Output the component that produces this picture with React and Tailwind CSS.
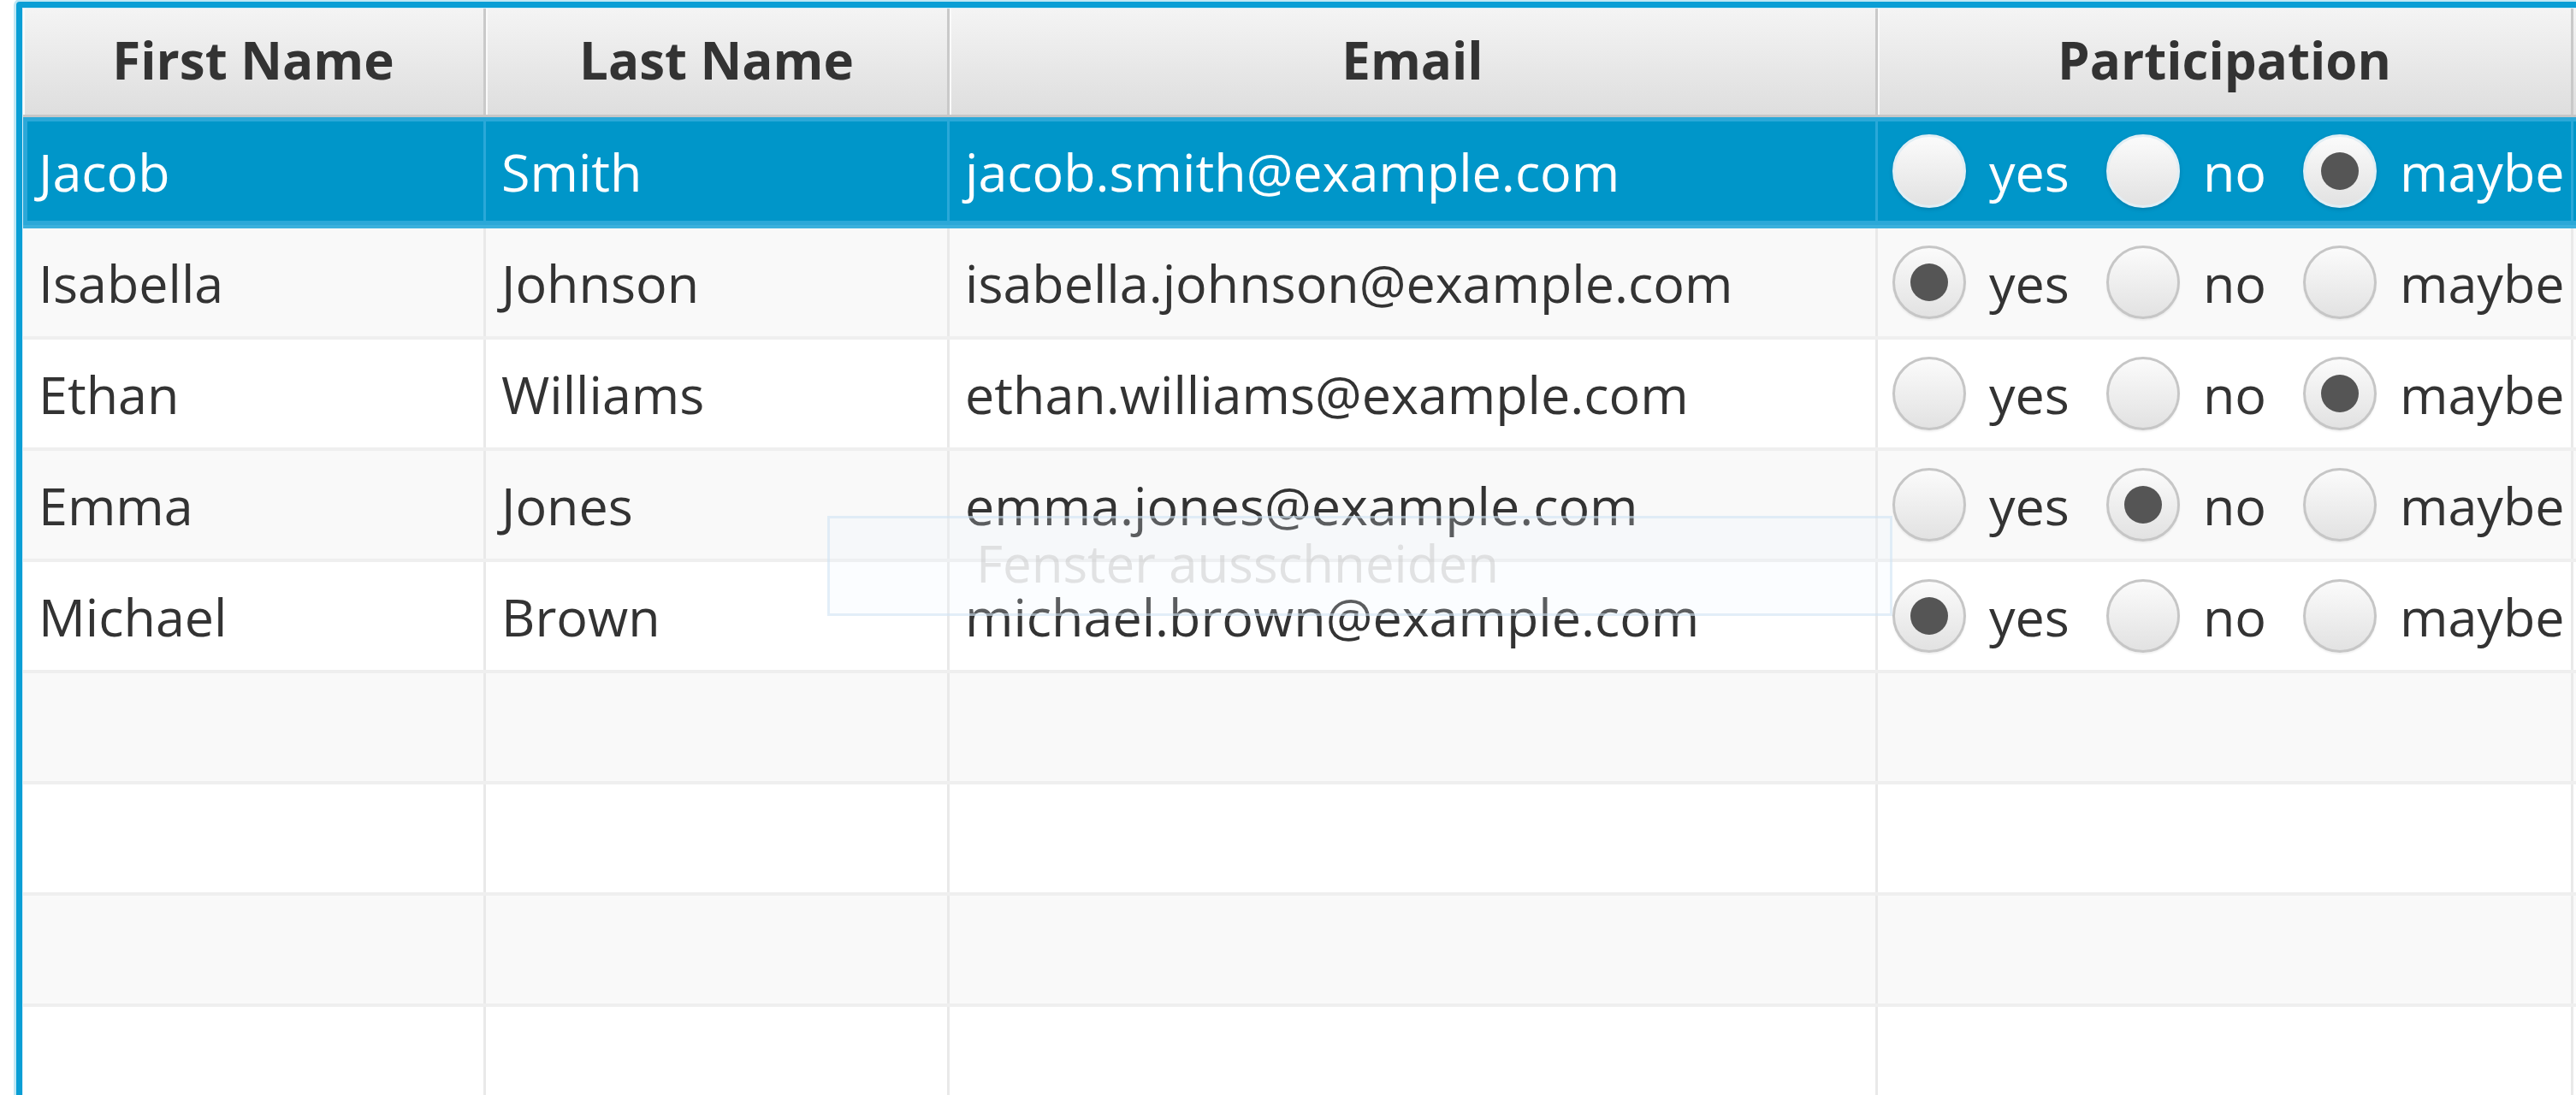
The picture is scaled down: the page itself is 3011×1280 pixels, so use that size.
import React from "react";

const rows = [
  { first: "Jacob", last: "Smith", email: "jacob.smith@example.com", p: "maybe" },
  { first: "Isabella", last: "Johnson", email: "isabella.johnson@example.com", p: "yes" },
  { first: "Ethan", last: "Williams", email: "ethan.williams@example.com", p: "maybe" },
  { first: "Emma", last: "Jones", email: "emma.jones@example.com", p: "no" },
  { first: "Michael", last: "Brown", email: "michael.brown@example.com", p: "yes" },
  null,
  null,
  null,
  null,
];

function Radio({ checked, label, selected, last }) {
  return (
    <div className={"flex items-center " + (last ? "" : "mr-[43px]")}>
      <div
        className={
          "w-[86px] h-[86px] rounded-full flex items-center justify-center shrink-0 bg-gradient-to-b from-[#fbfbfb] to-[#e2e2e2] " +
          (selected
            ? "border-[3px] border-[#e2eef4] shadow-[0_2px_4px_rgba(0,60,90,0.25)]"
            : "border-[3px] border-[#c6c6c6] shadow-[0_2px_2px_rgba(0,0,0,0.06)]")
        }
      >
        {checked && <div className="w-[44px] h-[44px] rounded-full bg-[#555555]" />}
      </div>
      <span className={"ml-[27px] " + (selected ? "text-white" : "text-[#333333]")}>{label}</span>
    </div>
  );
}

function Row({ data, index }) {
  const selected = index === 0;
  const odd = index % 2 === 1;
  const bg = selected ? "bg-[#0096c9]" : odd ? "bg-[#f9f9f9]" : "bg-white";
  const line = selected ? "border-[#2aa8d8]" : "border-[#e9e9e9]";
  const text = selected ? "text-white" : "text-[#333333]";
  return (
    <div
      className={
        "flex h-[130px] border-b-[4px] " +
        (selected ? "border-[#3ab0dc] shadow-[inset_0_0_0_5px_#2ba8d8] " : "border-[#efefef] ") +
        bg
      }
    >
      <div className={"w-[541px] shrink-0 border-r-[3px] pl-[18px] flex items-center " + line + " " + text}>
        {data ? data.first : ""}
      </div>
      <div className={"w-[542px] shrink-0 border-r-[3px] pl-[18px] flex items-center " + line + " " + text}>
        {data ? data.last : ""}
      </div>
      <div className={"w-[1085px] shrink-0 border-r-[3px] pl-[18px] flex items-center " + line + " " + text}>
        {data ? data.email : ""}
      </div>
      <div className={"w-[813px] shrink-0 border-r-[3px] pl-[17px] flex items-center " + line}>
        {data && (
          <>
            <Radio checked={data.p === "yes"} label="yes" selected={selected} />
            <Radio checked={data.p === "no"} label="no" selected={selected} />
            <Radio checked={data.p === "maybe"} label="maybe" selected={selected} last />
          </>
        )}
      </div>
    </div>
  );
}

function HeaderCell({ w, children }) {
  return (
    <div
      className={
        "shrink-0 h-full flex items-center justify-center pb-[4px] border-r-[3px] border-[#c9c9c9] shadow-[inset_2px_0_0_#fafafa] " + w
      }
    >
      {children}
    </div>
  );
}

export default function App() {
  return (
    <div
      className="relative w-[3011px] h-[1280px] overflow-hidden bg-white pl-[19px] pt-[2px] text-[61px] leading-none"
      style={{ fontFamily: '"Open Sans", "Noto Sans", sans-serif' }}
    >
      <div className="w-[3100px] border-[7px] border-[#0a9ed5] shadow-[0_0_0_3px_rgba(3,158,211,0.25)] rounded-[4px] bg-[#d8eef8] p-[1px]">
        <div className="bg-white">
          <div className="flex h-[127px] bg-gradient-to-b from-[#f4f4f4] to-[#dedede] border-b-[3px] border-[#c6c6c6] font-bold text-[#333333] text-[60px] rounded-tl-[5px]">
            <HeaderCell w="w-[541px]">First Name</HeaderCell>
            <HeaderCell w="w-[542px]">Last Name</HeaderCell>
            <HeaderCell w="w-[1085px]">Email</HeaderCell>
            <HeaderCell w="w-[813px]">Participation</HeaderCell>
          </div>
          {rows.map((r, i) => (
            <Row key={i} data={r} index={i} />
          ))}
        </div>
      </div>

      <div className="absolute left-[967px] top-[603px] w-[1245px] h-[117px] border-[3px] border-[rgba(205,226,242,0.55)] bg-[rgba(236,246,255,0.22)] flex items-center pl-[171px]">
        <span className="text-[rgba(200,200,200,0.5)] text-[60px] -mt-[8px]">Fenster ausschneiden</span>
      </div>
    </div>
  );
}
